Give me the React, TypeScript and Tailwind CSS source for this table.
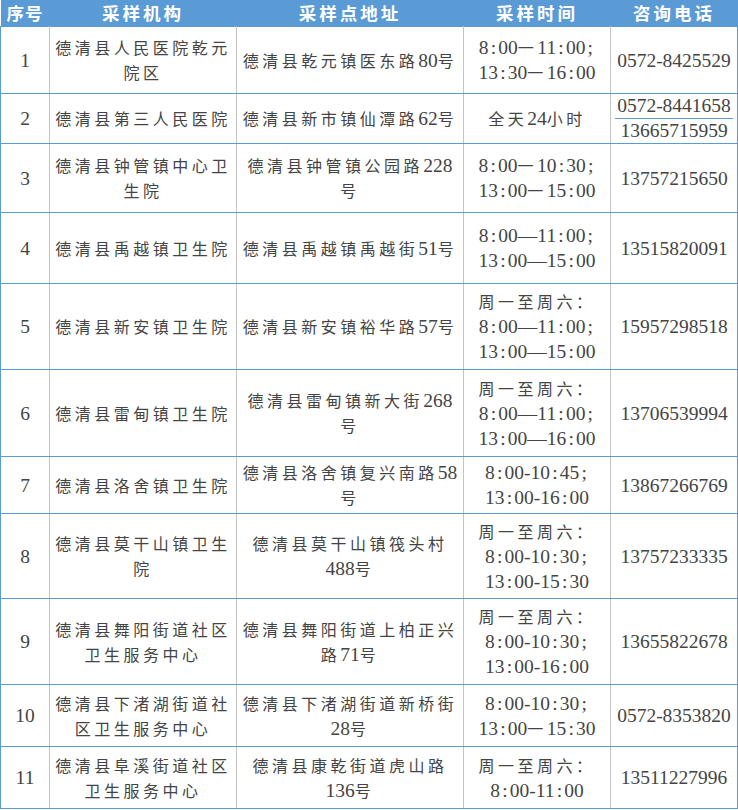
import React from "react";

const CJK = /([\u2E80-\u9FFF\uFF00-\uFFEF\u3000-\u303F]+)/;
const PUNCT = /([:;])/;

function Ascii({ s }: { s: string }) {
  return (
    <>
      {s.split(PUNCT).map((p, i) =>
        p === "" ? null : PUNCT.test(p) ? (
          <span key={i} className="inline-block w-[9.75px] text-center">
            {p}
          </span>
        ) : (
          <span key={i}>{p}</span>
        )
      )}
    </>
  );
}

function Txt({ s }: { s: string }) {
  return (
    <>
      {s.split(CJK).map((p, i) =>
        p === "" ? null : CJK.test(p) ? (
          <span key={i} className="font-['Noto_Sans_CJK_SC',sans-serif] text-[16px] tracking-[3.5px]">
            {p}
          </span>
        ) : (
          <Ascii key={i} s={p} />
        )
      )}
    </>
  );
}

type Row = {
  n: string;
  org: string;
  addr: string;
  time: string[];
  phone: string[];
  h: string;
};

const rows: Row[] = [
  { n: "1", org: "德清县人民医院乾元院区", addr: "德清县乾元镇医东路80号", time: ["8:00一11:00;", "13:30一16:00"], phone: ["0572-8425529"], h: "h-[67px]" },
  { n: "2", org: "德清县第三人民医院", addr: "德清县新市镇仙潭路62号", time: ["全天24小时"], phone: ["0572-8441658", "13665715959"], h: "h-[50px]" },
  { n: "3", org: "德清县钟管镇中心卫生院", addr: "德清县钟管镇公园路228号", time: ["8:00一10:30;", "13:00一15:00"], phone: ["13757215650"], h: "h-[69px]" },
  { n: "4", org: "德清县禹越镇卫生院", addr: "德清县禹越镇禹越街51号", time: ["8:00—11:00;", "13:00—15:00"], phone: ["13515820091"], h: "h-[71px]" },
  { n: "5", org: "德清县新安镇卫生院", addr: "德清县新安镇裕华路57号", time: ["周一至周六：", "8:00—11:00;", "13:00—15:00"], phone: ["15957298518"], h: "h-[86px]" },
  { n: "6", org: "德清县雷甸镇卫生院", addr: "德清县雷甸镇新大街268号", time: ["周一至周六：", "8:00—11:00;", "13:00—16:00"], phone: ["13706539994"], h: "h-[87px]" },
  { n: "7", org: "德清县洛舍镇卫生院", addr: "德清县洛舍镇复兴南路58号", time: ["8:00-10:45;", "13:00-16:00"], phone: ["13867266769"], h: "h-[57px]" },
  { n: "8", org: "德清县莫干山镇卫生院", addr: "德清县莫干山镇筏头村488号", time: ["周一至周六：", "8:00-10:30;", "13:00-15:30"], phone: ["13757233335"], h: "h-[85px]" },
  { n: "9", org: "德清县舞阳街道社区卫生服务中心", addr: "德清县舞阳街道上柏正兴路71号", time: ["周一至周六：", "8:00-10:30;", "13:00-16:00"], phone: ["13655822678"], h: "h-[86px]" },
  { n: "10", org: "德清县下渚湖街道社区卫生服务中心", addr: "德清县下渚湖街道新桥街28号", time: ["8:00-10:30;", "13:00一15:30"], phone: ["0572-8353820"], h: "h-[62px]" },
  { n: "11", org: "德清县阜溪街道社区卫生服务中心", addr: "德清县康乾街道虎山路136号", time: ["周一至周六：", "8:00-11:00"], phone: ["13511227996"], h: "h-[62px]" },
];

const cell =
  "border-y border-y-[#5b9bd5] border-x border-x-[#c3c3c3] text-center align-middle px-[4px] py-0";

export default function App() {
  return (
    <div className="w-[738px] h-[810px] bg-white overflow-hidden">
      <table className="table-fixed border-collapse w-[737px] text-[19.5px] leading-[25px] text-[#444444] font-['Liberation_Serif','Noto_Sans_CJK_SC',serif]">
        <colgroup>
          <col className="w-[49px]" />
          <col className="w-[187px]" />
          <col className="w-[227px]" />
          <col className="w-[147px]" />
          <col className="w-[127px]" />
        </colgroup>
        <thead>
          <tr className="h-[26px] bg-[#5b9bd5]">
            {["序号", "采样机构", "采样点地址", "采样时间", "咨询电话"].map((t, i) => (
              <th
                key={i}
                className={`p-0 text-center align-middle text-white font-bold text-[17.5px] leading-[26px] font-['Noto_Sans_CJK_SC',sans-serif] ${i === 0 ? "tracking-[1px]" : "tracking-[3px]"}`}
              >
                {t}
              </th>
            ))}
          </tr>
        </thead>
        <tbody>
          {rows.map((r) => (
            <tr key={r.n} className={r.h}>
              <td className={`${cell} border-l-[#5b9bd5]`}>
                <Txt s={r.n} />
              </td>
              <td className={cell}>
                <Txt s={r.org} />
              </td>
              <td className={cell}>
                <Txt s={r.addr} />
              </td>
              <td className={cell}>
                {r.time.map((t, i) => (
                  <div key={i}>
                    <Txt s={t} />
                  </div>
                ))}
              </td>
              {r.phone.length === 1 ? (
                <td className={`${cell} border-r-[#5b9bd5] px-0`}>
                  <Txt s={r.phone[0]} />
                </td>
              ) : (
                <td className={`${cell} border-r-[#5b9bd5] p-0`}>
                  <div className="flex flex-col">
                    <div className="h-[25px] border-b border-[#5b9bd5] leading-[24px]">
                      <Txt s={r.phone[0]} />
                    </div>
                    <div className="h-[24px] leading-[24px]">
                      <Txt s={r.phone[1]} />
                    </div>
                  </div>
                </td>
              )}
            </tr>
          ))}
        </tbody>
      </table>
    </div>
  );
}
